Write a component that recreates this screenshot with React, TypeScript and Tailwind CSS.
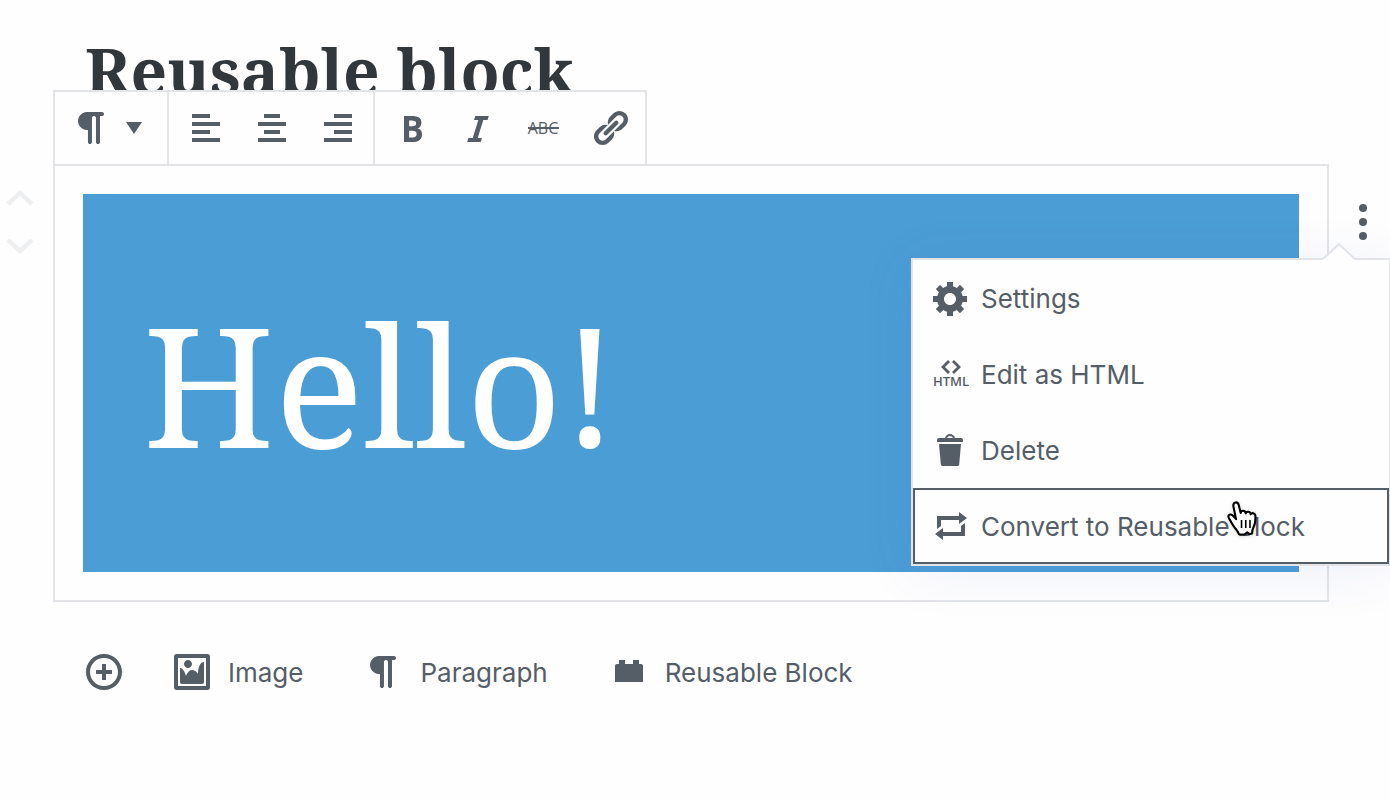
import type { ReactNode } from 'react';

const icons = {
  paragraph:
    'M15 2H7.54c-.83 0-1.59.2-2.28.6-.7.41-1.25.96-1.65 1.65C3.2 4.94 3 5.7 3 6.52s.2 1.58.61 2.27c.4.69.95 1.24 1.65 1.64.69.41 1.45.61 2.28.61h.43V17c0 .27.1.51.29.71.2.19.44.29.71.29.28 0 .51-.1.71-.29.2-.2.3-.44.3-.71V5c0-.27.09-.51.29-.71.2-.19.44-.29.71-.29s.51.1.71.29c.19.2.29.44.29.71v12c0 .27.1.51.3.71.2.19.43.29.71.29.27 0 .51-.1.71-.29.19-.2.29-.44.29-.71V4H15c.27 0 .5-.1.7-.3.2-.19.3-.43.3-.7s-.1-.51-.3-.71C15.5 2.1 15.27 2 15 2z',
  alignLeft: 'M12 5V3H3v2h9zm5 4V7H3v2h14zm-5 4v-2H3v2h9zm5 4v-2H3v2h14z',
  alignCenter: 'M14 5V3H6v2h8zm3 4V7H3v2h14zm-3 4v-2H6v2h8zm3 4v-2H3v2h14z',
  alignRight: 'M17 5V3H8v2h9zm0 4V7H3v2h14zm0 4v-2H8v2h9zm0 4v-2H3v2h14z',
  bold: 'M6 4v13h4.54c1.37 0 2.46-.33 3.26-1 .8-.66 1.2-1.58 1.2-2.77 0-.84-.17-1.51-.51-2.01s-.9-.85-1.67-1.03v-.09c.57-.1 1.02-.4 1.36-.9s.51-1.13.51-1.91c0-1.14-.39-1.98-1.17-2.5C12.75 4.26 11.5 4 9.78 4H6zm2.57 5.15V6.26h1.36c.73 0 1.27.11 1.61.32.34.22.51.58.51 1.07 0 .54-.16.92-.47 1.15s-.82.35-1.51.35h-1.5zm0 2.19h1.6c1.44 0 2.16.53 2.16 1.61 0 .6-.17 1.05-.51 1.34s-.86.43-1.57.43H8.57v-3.38z',
  italic: 'M14.78 6h-2.13l-2.8 9h2.12l-.62 2H4.6l.62-2h2.14l2.8-9H8.03l.62-2h6.75z',
  link: 'M17.74 2.76c1.68 1.69 1.68 4.41 0 6.1l-1.53 1.52c-1.12 1.12-2.7 1.47-4.14 1.09l2.62-2.61.76-.77.76-.76c.84-.84.84-2.2 0-3.04-.84-.85-2.2-.85-3.04 0l-.77.76-3.38 3.38c-.37-1.44-.02-3.02 1.1-4.14l1.52-1.53c1.69-1.68 4.42-1.68 6.1 0zM8.59 13.43l5.34-5.34c.42-.42.42-1.1 0-1.52-.44-.43-1.13-.39-1.53 0l-5.33 5.34c-.42.42-.42 1.1 0 1.52.44.43 1.13.39 1.52 0zm-.76 2.29l4.14-4.15c.38 1.44.03 3.02-1.09 4.14l-1.52 1.53c-1.69 1.68-4.41 1.68-6.1 0-1.68-1.68-1.68-4.42 0-6.1l1.53-1.52c1.12-1.12 2.7-1.47 4.14-1.1l-4.14 4.15c-.85.84-.85 2.2 0 3.05.84.84 2.2.84 3.04 0z',
  settings:
    'M18 12h-2.18c-.17.7-.44 1.35-.81 1.93l1.54 1.54-2.1 2.1-1.54-1.54c-.58.36-1.23.63-1.91.79V19H8v-2.18c-.68-.16-1.33-.43-1.91-.79l-1.54 1.54-2.12-2.12 1.54-1.54c-.36-.58-.63-1.23-.79-1.91H1V9.03h2.17c.16-.7.44-1.35.8-1.94L2.43 5.55l2.1-2.1 1.54 1.54c.58-.37 1.24-.64 1.93-.81V2h3v2.18c.68.16 1.33.43 1.91.79l1.54-1.54 2.12 2.12-1.54 1.54c.36.59.64 1.24.8 1.94H18V12zm-8.5 1.5c1.66 0 3-1.34 3-3s-1.34-3-3-3-3 1.34-3 3 1.34 3 3 3z',
  trash:
    'M12 4h3c.6 0 1 .4 1 1v1H3V5c0-.6.5-1 1-1h3c.2-1.1 1.3-2 2.5-2s2.3.9 2.5 2zM8 4h3c-.2-.6-.9-1-1.5-1S8.2 3.4 8 4zM4 7h11l-.9 10.1c0 .5-.5.9-1 .9H5.900c-.5 0-.9-.4-1-.9L4 7z',
  repeat: 'M5 7v3l-2 1.5V5h11V3l4 3.01L14 9V7H5zm10 6v-3l2-1.5V15H6v2l-4-3.01L6 11v2h9z',
  insert:
    'M10 1c-5 0-9 4-9 9s4 9 9 9 9-4 9-9-4-9-9-9zm0 16c-3.9 0-7-3.1-7-7s3.1-7 7-7 7 3.1 7 7-3.1 7-7 7zm1-11H9v3H6v2h3v3h2v-3h3V9h-3V6z',
  image:
    'M2.25 1h15.5c.69 0 1.25.56 1.25 1.25v15.5c0 .69-.56 1.25-1.25 1.25H2.25C1.56 19 1 18.44 1 17.75V2.25C1 1.56 1.56 1 2.25 1zM17 17V3H3v14h14zM10 6c0-1.1-.9-2-2-2s-2 .9-2 2 .9 2 2 2 2-.9 2-2zm3 5s0-6 3-6v10c0 .55-.45 1-1 1H5c-.55 0-1-.45-1-1V8c2 0 3 4 3 4s1-3 3-3 3 2 3 2z',
  block: 'M15 6V4h-3v2H8V4H5v2H4c-.6 0-1 .4-1 1v8h14V7c0-.6-.4-1-1-1h-1z',
};

function Icon({ name }: { name: keyof typeof icons }) {
  return (
    <svg viewBox="0 0 20 20" className="size-10 shrink-0 fill-current" aria-hidden="true">
      <path d={icons[name]} />
    </svg>
  );
}

function StrikeIcon() {
  return (
    <svg viewBox="0 0 40 40" className="size-10 fill-current" aria-hidden="true">
      <text x="19" y="26" textAnchor="middle" fontSize="16" fontWeight="500" fontFamily="Open Sans, sans-serif">
        ABC
      </text>
      <path d="M4 19h31v2H4z" />
    </svg>
  );
}

function HtmlIcon() {
  return (
    <svg viewBox="0 0 40 40" className="size-10 shrink-0 overflow-visible fill-current" aria-hidden="true">
      <path d="M18 7l-6 6 6 6M22 7l6 6-6 6" fill="none" stroke="currentColor" strokeWidth="2.8" />
      <text x="20" y="32" textAnchor="middle" fontSize="13" fontWeight="600" fontFamily="Open Sans, sans-serif">
        HTML
      </text>
    </svg>
  );
}

function HandCursor() {
  return (
    <svg
      viewBox="0 0 32 36"
      className="pointer-events-none absolute top-2.5 left-[311px] h-[38px] w-[34px] drop-shadow-sm"
      aria-hidden="true"
    >
      <path
        d="M12.2 32.4c-.6-2.2-2.2-3.9-3.9-6C6.4 24 5.2 21.8 3.8 19.2c-1-1.9-1.9-2.8-1.6-4 .4-1.5 2.2-1.9 3.6-.9 1.5 1 2.5 2.6 3.6 3.8L7 6.4C6.6 4.2 7.3 2.6 8.9 2.3c1.7-.3 2.7.9 3.2 2.9l1.7 7.2c.2-1.4 1-2.2 2.3-2.2 1.5 0 2.3 1 2.5 2.5.3-1.1 1.1-1.7 2.3-1.6 1.4.1 2.2 1 2.4 2.5.5-.9 1.3-1.3 2.3-1.1 1.5.3 2.2 1.5 2.2 3.1 0 3.7-.3 7-1.7 9.8-1 2-1.5 3.9-1.5 6.3l-2.5.6-2.1-1.600-2.600 2z"
        fill="#fff"
        stroke="#000"
        strokeWidth="2"
        strokeLinejoin="round"
      />
      <path d="M14.6 19v7.5M18.6 19v7.5M22.6 19v7.5" stroke="#000" strokeWidth="1.5" />
    </svg>
  );
}

function ToolbarButton({ label, children }: { label: string; children: ReactNode }) {
  return (
    <button type="button" aria-label={label} className="flex h-18 w-[66px] items-center justify-center">
      {children}
    </button>
  );
}

function Toolbar() {
  return (
    <div className="relative -mb-0.5 flex w-fit divide-x-2 divide-[#e2e4e7] border-2 border-[#e2e4e7] bg-[#fefefe]">
      <button type="button" aria-label="Change block type" className="flex h-18 w-[114px] items-center gap-3.5 pl-[17px]">
        <Icon name="paragraph" />
        <svg viewBox="0 0 16 12" className="h-3 w-4 fill-current" aria-hidden="true">
          <path d="M0 0h16L8 12z" />
        </svg>
      </button>
      <div className="flex pr-0.5 pl-1">
        <ToolbarButton label="Align left">
          <Icon name="alignLeft" />
        </ToolbarButton>
        <ToolbarButton label="Align center">
          <Icon name="alignCenter" />
        </ToolbarButton>
        <ToolbarButton label="Align right">
          <Icon name="alignRight" />
        </ToolbarButton>
      </div>
      <div className="flex pr-0.5 pl-1">
        <ToolbarButton label="Bold">
          <Icon name="bold" />
        </ToolbarButton>
        <ToolbarButton label="Italic">
          <Icon name="italic" />
        </ToolbarButton>
        <ToolbarButton label="Strikethrough">
          <StrikeIcon />
        </ToolbarButton>
        <ToolbarButton label="Link">
          <Icon name="link" />
        </ToolbarButton>
      </div>
    </div>
  );
}

function Mover({ label, d }: { label: string; d: string }) {
  return (
    <button type="button" aria-label={label} className="flex h-12 w-10 items-center justify-center text-[#eeeff1]">
      <svg viewBox="0 0 28 16" className="h-4 w-7" fill="none" stroke="currentColor" strokeWidth="4.5" aria-hidden="true">
        <path d={d} />
      </svg>
    </button>
  );
}

function MenuItem({ icon, label, active, children }: { icon: ReactNode; label: string; active?: boolean; children?: ReactNode }) {
  return (
    <button
      type="button"
      role="menuitem"
      className={`relative flex h-19 w-full items-center gap-2.5 border-2 px-4 text-left whitespace-nowrap ${
        active ? 'border-[#555d66]' : 'border-transparent'
      }`}
    >
      {icon}
      <span className="pt-0.5">{label}</span>
      {children}
    </button>
  );
}

function BlockMenu() {
  return (
    <div
      role="menu"
      className="absolute top-[94px] -right-px z-10 w-[480px] border-2 border-[#e2e4e7] bg-[#fefefe] shadow-[0_6px_50px_rgba(80,90,200,0.09)]"
    >
      <svg viewBox="0 0 32 18" className="absolute -top-[17px] right-[34px] h-[18px] w-8" aria-hidden="true">
        <path d="M0 16L16 1l16 15v2H0z" fill="#fefefe" />
        <path d="M0 16L16 1l16 15" fill="none" stroke="#e2e4e7" strokeWidth="2" />
      </svg>
      <MenuItem icon={<Icon name="settings" />} label="Settings" />
      <MenuItem icon={<HtmlIcon />} label="Edit as HTML" />
      <MenuItem icon={<Icon name="trash" />} label="Delete" />
      <MenuItem icon={<Icon name="repeat" />} label="Convert to Reusable Block" active>
        <HandCursor />
      </MenuItem>
    </div>
  );
}

function Shortcut({ icon, label }: { icon: keyof typeof icons; label: string }) {
  return (
    <button type="button" className="flex items-center gap-4">
      <Icon name={icon} />
      <span className="pt-0.5">{label}</span>
    </button>
  );
}

export default function App() {
  return (
    <main className="min-h-screen overflow-hidden bg-[#fefefe] font-['Inter',sans-serif] text-[26px] leading-10 text-[#555d66]">
      <h1 className="mt-[31px] -mb-[21px] ml-[85px] font-['Noto_Serif','DejaVu_Serif',serif] text-[64px] leading-20 font-bold text-[#32373c]">
        Reusable block
      </h1>

      <div className="ml-[53px]">
        <Toolbar />
      </div>

      <section className="relative flex">
        <div className="flex w-[53px] shrink-0 flex-col pt-2.5">
          <Mover label="Move up" d="M2 14L14 3l12 11" />
          <Mover label="Move down" d="M2 2l12 11L26 2" />
        </div>
        <div className="flex-1 border-2 border-[#e2e4e7] p-7">
          <p className="bg-[#4b9dd5] px-15 pt-[91px] pb-[89px] font-['Noto_Serif','DejaVu_Serif',serif] text-[166px] leading-[198px] text-white">
            Hello!
          </p>
        </div>
        <div className="flex w-[61px] shrink-0 items-start pt-7 pl-3.5">
          <button type="button" aria-label="More options" className="flex h-15 w-10 items-center justify-center">
            <svg viewBox="0 0 8 36" className="h-9 w-2 fill-current" aria-hidden="true">
              <circle cx="4" cy="4" r="4" />
              <circle cx="4" cy="18" r="4" />
              <circle cx="4" cy="32" r="4" />
            </svg>
          </button>
        </div>
        <BlockMenu />
      </section>

      <div className="mt-[49px] ml-[84px] flex items-center gap-12">
        <button type="button" aria-label="Add block">
          <Icon name="insert" />
        </button>
        <div className="flex gap-[61px]">
          <Shortcut icon="image" label="Image" />
          <Shortcut icon="paragraph" label="Paragraph" />
          <Shortcut icon="block" label="Reusable Block" />
        </div>
      </div>
    </main>
  );
}
